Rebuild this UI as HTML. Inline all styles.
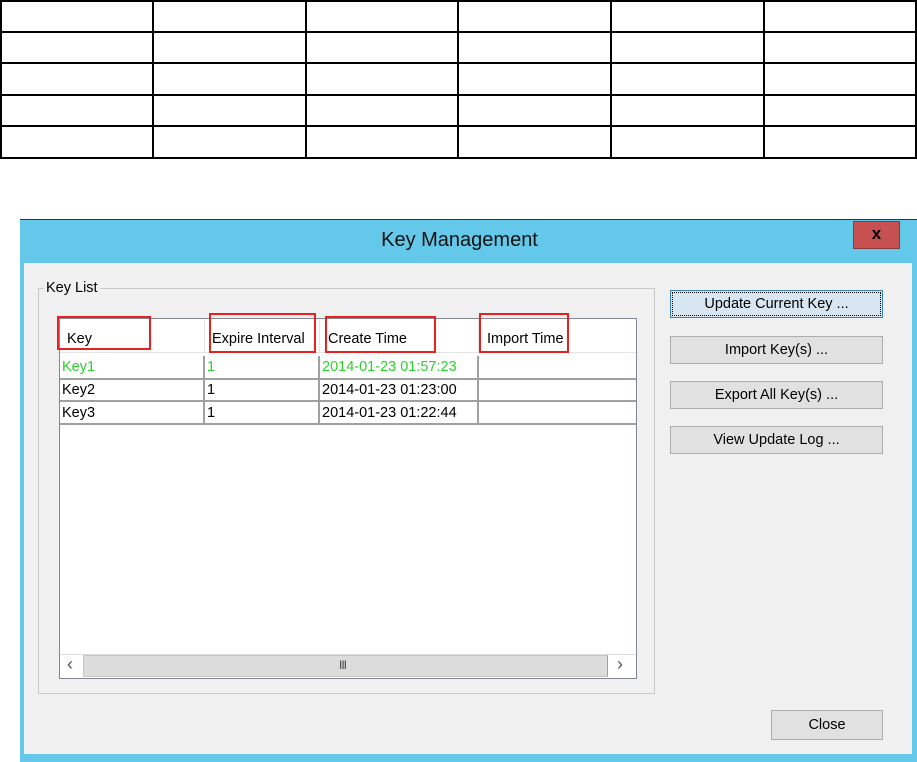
<!DOCTYPE html>
<html><head><style>
*{margin:0;padding:0;box-sizing:border-box}
body{width:917px;height:762px;background:#fff;position:relative;overflow:hidden;font-family:"Liberation Sans",Arial,sans-serif;font-size:14px;color:#000}
.a{position:absolute}
.h{position:absolute;height:2px;background:#000;left:0;width:917px}
.v{position:absolute;width:2px;background:#000;top:0;height:159px}
.btn{position:absolute;left:670px;width:213px;height:28px;background:#e1e1e1;border:1px solid #adadad;text-align:center;line-height:26px;font-size:14.5px}
.red{position:absolute;border:2px solid #e82020;background:transparent}
.cell{position:absolute;height:20px;line-height:20px;font-size:14.5px;padding-left:2px}
</style></head><body>
<div class="h" style="top:0"></div><div class="h" style="top:31px"></div><div class="h" style="top:62px"></div><div class="h" style="top:94px"></div><div class="h" style="top:125px"></div><div class="h" style="top:157px"></div>
<div class="v" style="left:0"></div><div class="v" style="left:152px"></div><div class="v" style="left:305px"></div><div class="v" style="left:457px"></div><div class="v" style="left:610px"></div><div class="v" style="left:763px"></div><div class="v" style="left:915px"></div>

<div class="a" style="left:20px;top:219px;width:897px;height:543px;background:#63c8e9;border-top:1px solid #333"></div>
<div class="a" style="left:0;width:917px;top:230px;text-align:center;font-size:20px;line-height:1;padding-left:2px;color:#111">Key Management</div>
<div class="a" style="left:853px;top:221px;width:47px;height:28px;background:#c75050;border:1px solid #8a3a3a;color:#000;font-weight:bold;font-size:17px;text-align:center;line-height:24px">x</div>
<div class="a" style="left:24px;top:263px;width:888px;height:491px;background:#f0f0f0"></div>

<div class="a" style="left:38px;top:288px;width:617px;height:406px;border:1px solid #c8c8c8"></div>
<div class="a" style="left:44px;top:280px;background:#f0f0f0;padding:0 2px;font-size:14.5px">Key List</div>

<div class="a" style="left:59px;top:318px;width:578px;height:361px;background:#fff;border:1px solid #828790"></div>
<div class="a" style="left:60px;top:319px;width:576px;height:34px;background:#fff;border-bottom:1px solid #e5e5e5"></div>
<div class="a" style="left:204px;top:319px;width:1px;height:34px;background:#e5e5e5"></div>
<div class="a" style="left:319px;top:319px;width:1px;height:34px;background:#e5e5e5"></div>
<div class="a" style="left:478px;top:319px;width:1px;height:34px;background:#e5e5e5"></div>
<div class="a" style="left:67px;top:331px;font-size:14.5px">Key</div>
<div class="a" style="left:212px;top:331px;font-size:14.5px">Expire Interval</div>
<div class="a" style="left:328px;top:331px;font-size:14.5px">Create Time</div>
<div class="a" style="left:487px;top:331px;font-size:14.5px">Import Time</div>

<div class="a" style="left:60px;top:378px;width:576px;height:2px;background:#a0a0a0"></div>
<div class="a" style="left:60px;top:400px;width:576px;height:2px;background:#a0a0a0"></div>
<div class="a" style="left:60px;top:423px;width:576px;height:2px;background:#a0a0a0"></div>
<div class="a" style="left:203px;top:356px;width:2px;height:69px;background:#a0a0a0"></div>
<div class="a" style="left:318px;top:356px;width:2px;height:69px;background:#a0a0a0"></div>
<div class="a" style="left:477px;top:356px;width:2px;height:69px;background:#a0a0a0"></div>
<div class="cell" style="left:60px;top:357px;color:#2ed02e">Key1</div>
<div class="cell" style="left:205px;top:357px;color:#2ed02e">1</div>
<div class="cell" style="left:320px;top:357px;color:#2ed02e">2014-01-23 01:57:23</div>
<div class="cell" style="left:60px;top:380px">Key2</div>
<div class="cell" style="left:205px;top:380px">1</div>
<div class="cell" style="left:320px;top:380px">2014-01-23 01:23:00</div>
<div class="cell" style="left:60px;top:403px">Key3</div>
<div class="cell" style="left:205px;top:403px">1</div>
<div class="cell" style="left:320px;top:403px">2014-01-23 01:22:44</div>

<div class="a" style="left:60px;top:654px;width:576px;height:24px;background:#fff;border-top:1px solid #ddd"></div>
<div class="a" style="left:83px;top:655px;width:525px;height:22px;background:#dcdcdc;border:1px solid #c6c6c6;border-right-color:#a0a0a0"></div>
<div class="a" style="left:67px;top:654px;color:#555;font-size:18px">&#8249;</div>
<div class="a" style="left:617px;top:654px;color:#555;font-size:18px">&#8250;</div>
<div class="a" style="left:339px;top:658px;color:#444;font-size:12px;letter-spacing:-1px">III</div>

<div class="btn" style="top:290px;background:#d8e6f2;border:1px solid #3c7fb1;outline:1px dotted #000;outline-offset:-3px">Update Current Key ...</div>
<div class="btn" style="top:336px">Import Key(s) ...</div>
<div class="btn" style="top:381px">Export All Key(s) ...</div>
<div class="btn" style="top:426px">View Update Log ...</div>
<div class="btn" style="top:710px;left:771px;width:112px;height:30px;line-height:28px">Close</div>

<div class="red" style="left:57px;top:316px;width:94px;height:34px"></div>
<div class="red" style="left:209px;top:313px;width:107px;height:40px"></div>
<div class="red" style="left:325px;top:316px;width:111px;height:37px"></div>
<div class="red" style="left:479px;top:313px;width:90px;height:40px"></div>
</body></html>
